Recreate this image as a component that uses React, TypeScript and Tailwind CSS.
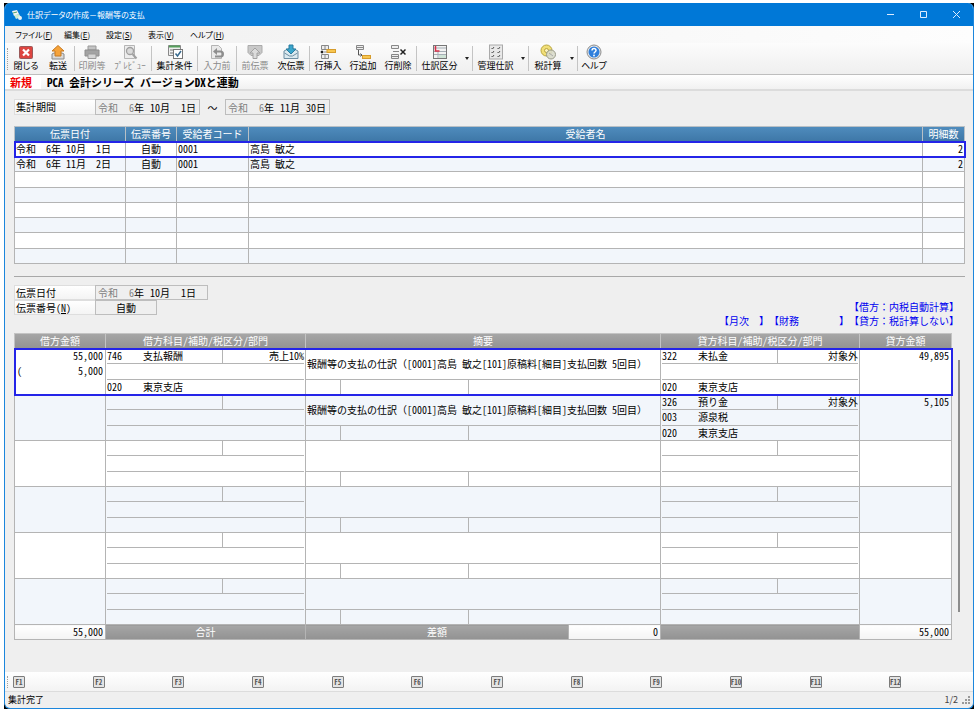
import { Fragment, ReactNode } from "react";

type IconName =
  | "close" | "send" | "print" | "preview" | "filter" | "before" | "prev" | "next"
  | "insert" | "append" | "remove" | "division" | "manage" | "tax" | "help";

const icons: Record<IconName, ReactNode> = {
  close: (
    <>
      <rect x="1.500" y="2.500" width="13" height="12" rx="1" fill="#dd4540" stroke="#9a5a5a" />
      <path d="M5 5.500l6 6M11 5.500l-6 6" stroke="#fff" strokeWidth="2.200" />
    </>
  ),
  send: (
    <>
      <path d="M2 10v5h12v-5l-2-1H4z" fill="#d9d9d9" stroke="#8a8a8a" />
      <path d="M8 1.500l6 5.500h-3v5H5V7H2z" fill="#f6a33a" stroke="#c77a22" />
    </>
  ),
  print: (
    <>
      <path d="M4 2h8v4H4z" fill="#c4c4c4" stroke="#999" />
      <path d="M1 6h14v6H1z" fill="#a3a3a3" stroke="#8e8e8e" />
      <path d="M4 10h8v4.500H4z" fill="#d6d6d6" stroke="#999" />
    </>
  ),
  preview: (
    <>
      <path d="M2.500 1.500h10v13h-10z" fill="#ededed" stroke="#b5b5b5" />
      <circle cx="8" cy="7" r="3.500" fill="#dadada" stroke="#a0a0a0" strokeWidth="1.300" />
      <path d="M10.500 10l4 4.500" stroke="#a0a0a0" strokeWidth="2" />
    </>
  ),
  filter: (
    <>
      <path d="M1.500 1.500h12v10h-12z" fill="#eee" stroke="#888" />
      <path d="M2 2.500h11" stroke="#56a05c" strokeWidth="2" />
      <path d="M3 6h3M3 9h3" stroke="#777" />
      <rect x="6.500" y="5.500" width="9" height="9" fill="#fff" stroke="#777" />
      <path d="M8.500 9.500l2 2.500 3.500-5" fill="none" stroke="#386a8e" strokeWidth="1.500" />
    </>
  ),
  before: (
    <>
      <path d="M2.500 1.500h7l3 3v10h-10z" fill="#e9e9e9" stroke="#b4b4b4" />
      <path d="M7 7.500h4.500a2.500 2.500 0 010 5H6" fill="none" stroke="#8e8e8e" strokeWidth="2" />
      <path d="M8 4v7L4 7.500z" fill="#8e8e8e" />
    </>
  ),
  prev: (
    <>
      <path d="M1 1.500h14v7l-3 3H4l-3-3z" fill="#c9c9c9" stroke="#ababab" />
      <path d="M8 4l5 5h-3v5.500H6V9H3z" fill="#dcdcdc" stroke="#a2a2a2" />
    </>
  ),
  next: (
    <>
      <path d="M1 7v7.500h14V7l-4-2H5z" fill="#dbe9ef" stroke="#6e8fa3" />
      <path d="M1.500 9l5 3h3l5-3" fill="none" stroke="#6e8fa3" />
      <path d="M6 1h4v4h3l-5 5-5-5h3z" fill="#3aa6cc" stroke="#2b7da0" />
    </>
  ),
  insert: (
    <>
      <path d="M1.500 1.500h7v4h-7zM1.500 10.500h7v4h-7zM5 1.500v4M5 10.500v4" fill="#eee" stroke="#888" />
      <path d="M1 7h2v2H1zM4 8h3" fill="#222" stroke="#222" strokeWidth="0.500" />
      <rect x="7" y="5.500" width="8.500" height="3" fill="#f8c64f" stroke="#d69c2c" />
    </>
  ),
  append: (
    <>
      <path d="M1.500 1.500h7v4h-7zM1.500 3.500h7" fill="#eee" stroke="#888" />
      <path d="M3.500 6v5h3M5.500 9.500L7 11l-1.500 1.500" fill="none" stroke="#555" />
      <rect x="7.500" y="11.500" width="8" height="3" fill="#f8c64f" stroke="#d69c2c" />
    </>
  ),
  remove: (
    <>
      <path d="M1.500 1.500h7v3h-7zM1.500 10.500h7v4h-7zM1.500 12.500h7M3 7.500h6" fill="#eee" stroke="#888" />
      <path d="M10.500 5.500l5 5M15.500 5.500l-5 5" stroke="#222" strokeWidth="1.500" />
    </>
  ),
  division: (
    <>
      <rect x="1.500" y="1.500" width="13" height="13" fill="#f2f2f2" stroke="#777" />
      <path d="M2 4h12M2 7.500h12M2 10.500h12M6 8v6" stroke="#a5aeb5" />
      <path d="M3.500 2v5h4" fill="none" stroke="#d9304a" strokeWidth="1.500" />
      <path d="M7 11h7v3H7z" fill="#cfe3d6" />
    </>
  ),
  manage: (
    <>
      <rect x="1.500" y="1" width="13" height="14" fill="#e8e8e8" stroke="#aaa" />
      <path d="M3.500 4l1 1 1.500-2M3.500 8l1 1 1.500-2M3.500 12l1 1 1.500-2M9.500 4l1 1 1.500-2M9.500 8l1 1 1.500-2M9.500 12l1 1 1.500-2" fill="none" stroke="#555" />
    </>
  ),
  tax: (
    <>
      <circle cx="6.500" cy="6.500" r="5.500" fill="#f1df78" stroke="#b9a640" />
      <circle cx="6.500" cy="6.500" r="2" fill="#fbf3c0" stroke="#b9a640" />
      <circle cx="11" cy="10.500" r="4.500" fill="#d8dacb" fillOpacity="0.900" stroke="#989a8a" />
      <path d="M9 9l4 3" stroke="#aaa" />
    </>
  ),
  help: (
    <>
      <circle cx="8" cy="8" r="7" fill="#e6e6e6" stroke="#8d8d8d" />
      <circle cx="8" cy="8" r="5.500" fill="#2f7fdc" />
      <path d="M6 6.500c0-3 4.200-2.500 4 0C9.900 8 8 8 8 9.500" fill="none" stroke="#fff" strokeWidth="1.500" />
      <circle cx="8" cy="11.500" r="0.900" fill="#fff" />
    </>
  ),
};

function Icon({ name }: { name: IconName }) {
  return (
    <svg viewBox="0 0 16 16" className="size-4 shrink-0" aria-hidden="true">
      {icons[name]}
    </svg>
  );
}

type Tool = { icon: IconName; label: string; width: string; off?: boolean; menu?: string };

const toolGroups: Tool[][] = [
  [
    { icon: "close", label: "閉じる", width: "w-8" },
    { icon: "send", label: "転送", width: "w-8" },
  ],
  [
    { icon: "print", label: "印刷等", width: "w-[34px]", off: true },
    { icon: "preview", label: "ﾌﾟﾚﾋﾞｭｰ", width: "w-[42px]", off: true },
  ],
  [{ icon: "filter", label: "集計条件", width: "w-[45px]" }],
  [{ icon: "before", label: "入力前", width: "w-[38px]", off: true }],
  [
    { icon: "prev", label: "前伝票", width: "w-9", off: true },
    { icon: "next", label: "次伝票", width: "w-9" },
  ],
  [
    { icon: "insert", label: "行挿入", width: "w-9" },
    { icon: "append", label: "行追加", width: "w-[34px]" },
    { icon: "remove", label: "行削除", width: "w-9" },
  ],
  [{ icon: "division", label: "仕訳区分", width: "w-[45px]", menu: "w-[10px]" }],
  [{ icon: "manage", label: "管理仕訳", width: "w-[45px]", menu: "w-[10px]" }],
  [{ icon: "tax", label: "税計算", width: "w-[38px]", menu: "w-[10px]" }],
  [{ icon: "help", label: "ヘルプ", width: "w-8" }],
];

const menus = [
  { label: "ファイル", key: "F", width: "w-[49px]" },
  { label: "編集", key: "E", width: "w-[42px]" },
  { label: "設定", key: "S", width: "w-[42px]" },
  { label: "表示", key: "V", width: "w-[42px]" },
  { label: "ヘルプ", key: "H", width: "w-[49px]" },
];

function TitleBar() {
  return (
    <header className="flex h-[23px] items-center bg-[#0078d7] pl-[6px] text-[8px] text-white">
      <svg viewBox="0 0 12 12" className="mr-1 size-3" aria-hidden="true">
        <path d="M1 2l5-1 2 4-5 2z" fill="#f4f4f4" />
        <path d="M3 6l5-1 2 3-5 2z" fill="#c9ecd2" />
        <circle cx="9" cy="9" r="2" fill="#e9f1f6" />
        <path d="M2 4l4-1" stroke="#53a668" />
      </svg>
      <h1 className="flex-1">仕訳データの作成－報酬等の支払</h1>
      {[
        { label: "最小化", d: "M1 4.500h7" },
        { label: "最大化", d: "M1.500 1.500h6v6h-6z" },
        { label: "閉じる", d: "M1 1l7 7M8 1L1 8" },
      ].map((b) => (
        <button key={b.label} aria-label={b.label} className="flex h-full w-[33px] items-center justify-center">
          <svg viewBox="0 0 9 9" className="size-[9px]" fill="none" stroke="#dcecff" aria-hidden="true">
            <path d={b.d} />
          </svg>
        </button>
      ))}
    </header>
  );
}

function MenuBar() {
  return (
    <nav className="flex h-[17px] items-center bg-linear-to-r from-[#f0f0f0] to-[#fdfdfd] pl-[10px] text-[8px]">
      {menus.map((m) => (
        <button key={m.key} className={`${m.width} text-left whitespace-nowrap`}>
          {m.label}(<u>{m.key}</u>)
        </button>
      ))}
    </nav>
  );
}

function Toolbar() {
  return (
    <div role="toolbar" className="flex h-8 items-center border-b border-[#bebebe] bg-linear-to-b from-[#fcfcfc] to-[#efefef] text-[9px]">
      <span className="mx-[2px] h-[22px] w-px border-l border-dotted border-[#a0a0a0]" />
      {toolGroups.map((group, i) => (
        <Fragment key={i}>
          {i > 0 && <span className="h-[25px] w-px bg-[#c4c4c4]" />}
          {group.map((t) => (
            <Fragment key={t.label}>
              <button
                disabled={t.off}
                className={`${t.width} flex h-[29px] flex-col items-center leading-[12px] whitespace-nowrap disabled:text-[#8a8a8a]`}
              >
                <Icon name={t.icon} />
                {t.label}
              </button>
              {t.menu && (
                <button aria-label={`${t.label}のメニュー`} className={`${t.menu} flex justify-center`}>
                  <svg viewBox="0 0 4 3" className="h-[3px] w-1" aria-hidden="true">
                    <path d="M0 0h4L2 3z" fill="#222" />
                  </svg>
                </button>
              )}
            </Fragment>
          ))}
        </Fragment>
      ))}
    </div>
  );
}

const labelBox =
  "block h-full w-[81px] border border-r-0 border-[#dedede] bg-linear-to-b from-white to-[#f4f4f4] pl-[1px] leading-[14px]";

// Full-width punctuation keeps its full cell inside half-width text.
function Wide({ children }: { children: ReactNode }) {
  return <span className="[font-feature-settings:normal]">{children}</span>;
}

function DateField({ name, year, month, day, width }: { name: string; year: string; month: string; day: string; width: string }) {
  return (
    <span className={`${width} flex h-full items-center border border-[#bdbdbd] pl-[2px]`}>
      <input readOnly aria-label={`${name} 元号`} value="令和" className="w-5 text-[#808080]" />
      <input readOnly aria-label={`${name} 年`} value={year} className="w-4 text-right text-[#808080]" />
      年
      <input readOnly aria-label={`${name} 月`} value={month} className="w-4 text-right" />
      月
      <input readOnly aria-label={`${name} 日`} value={day} className="w-4 text-right" />
      日
    </span>
  );
}

const vouchers = [
  { date: "令和  6年 10月  1日", no: "自動", code: "0001", name: "高島 敏之", count: "2" },
  { date: "令和  6年 11月  2日", no: "自動", code: "0001", name: "高島 敏之", count: "2" },
];

function VoucherTable() {
  const rows = Array.from({ length: 8 }, (_, i) => vouchers[i]);
  const cell = "border border-[#b4b4b4] px-px py-0 whitespace-pre";
  return (
    <table className="mt-[11px] w-full table-fixed border-collapse leading-[14px]">
      <colgroup>
        <col className="w-[111px]" />
        <col className="w-[51px]" />
        <col className="w-[72px]" />
        <col />
        <col className="w-[42px]" />
      </colgroup>
      <thead>
        <tr className="h-[15px] bg-linear-to-b from-[#4f8cbd] to-[#3d76a6] text-white">
          {["伝票日付", "伝票番号", "受給者コード", "受給者名", "明細数"].map((h) => (
            <th key={h} className="border border-[#b8c0c6] p-0 font-normal">{h}</th>
          ))}
        </tr>
      </thead>
      <tbody>
        {rows.map((r, i) => (
          <tr
            key={i}
            className={`${i % 4 === 2 ? "h-4" : "h-[15px]"} ${
              i === 0
                ? "relative bg-white outline-2 -outline-offset-1 outline-[#2424e8]"
                : i % 2
                  ? "bg-[#f2f6fb]"
                  : "bg-white"
            }`}
          >
            <td className={cell}>{r?.date}</td>
            <td className={`${cell} text-center`}>{r?.no}</td>
            <td className={cell}>{r?.code}</td>
            <td className={cell}>{r?.name}</td>
            <td className={`${cell} text-right`}>{r?.count}</td>
          </tr>
        ))}
      </tbody>
    </table>
  );
}

type Account = { code: string; name: string; tax: string; subCode?: string; sub?: string; deptCode: string; dept: string };
type Entry = { debit?: string; debitTax?: string; debitAcc?: Account; note?: ReactNode; credit?: string; creditAcc?: Account };

const note = (
  <p>
    報酬等の支払の仕訳<Wide>（</Wide>[0001]高島 敏之[101]原稿料[細目]支払回数 5回目<Wide>）</Wide>
  </p>
);

const entries: Entry[] = [
  {
    debit: "55,000",
    debitTax: "5,000",
    debitAcc: { code: "746", name: "支払報酬", tax: "売上10%", deptCode: "020", dept: "東京支店" },
    note,
    credit: "49,895",
    creditAcc: { code: "322", name: "未払金", tax: "対象外", deptCode: "020", dept: "東京支店" },
  },
  {
    note,
    credit: "5,105",
    creditAcc: { code: "326", name: "預り金", tax: "対象外", subCode: "003", sub: "源泉税", deptCode: "020", dept: "東京支店" },
  },
  {},
  {},
  {},
  {},
];

function AccountCell({ acc }: { acc?: Account }) {
  return (
    <div className="px-px leading-[13px]">
      <div className="flex h-[15px] border-b border-[#b4b4b4]">
        <span className="w-9">{acc?.code}</span>
        <span className="w-20 border-r border-[#b4b4b4]">{acc?.name}</span>
        <span className="flex-1 text-right">{acc?.tax}</span>
      </div>
      <div className="flex h-4 border-b border-[#b4b4b4]">
        <span className="w-9">{acc?.subCode}</span>
        <span>{acc?.sub}</span>
      </div>
      <div className="flex h-[14px]">
        <span className="w-9">{acc?.deptCode}</span>
        <span>{acc?.dept}</span>
      </div>
    </div>
  );
}

function JournalTable() {
  const td = "border border-[#b4b4b4] p-0 align-top";
  const th = "border border-[#c4c4c4] p-0 font-normal";
  const gray = "bg-linear-to-b from-[#a6a6a6] to-[#929292] text-white";
  const total = "border border-[#b4b4b4] bg-linear-to-b from-white to-[#f3f3f3] px-[2px] py-0 text-right";
  return (
    <table className="flex-1 table-fixed border-collapse leading-[14px]">
      <colgroup>
        <col className="w-[91px]" />
        <col className="w-[200px]" />
        <col />
        <col className="w-[92px]" />
        <col className="w-[199px]" />
        <col className="w-[92px]" />
      </colgroup>
      <thead>
        <tr className={gray}>
          <th className={th}>借方金額</th>
          <th className={th}>借方科目/補助/税区分/部門</th>
          <th colSpan={2} className={th}>摘要</th>
          <th className={th}>貸方科目/補助/税区分/部門</th>
          <th className={th}>貸方金額</th>
        </tr>
      </thead>
      <tbody>
        {entries.map((e, i) => (
          <tr
            key={i}
            className={
              i === 0
                ? "relative bg-white outline-2 -outline-offset-1 outline-[#2424e8]"
                : i % 2
                  ? "bg-[#f2f6fb]"
                  : "bg-white"
            }
          >
            <td className={`${td} px-[2px] leading-[13px]`}>
              <div className="h-[15px] text-right">{e.debit}</div>
              {e.debitTax && (
                <div className="flex justify-between">
                  <span>(</span>
                  <span>{e.debitTax}</span>
                </div>
              )}
            </td>
            <td className={td}><AccountCell acc={e.debitAcc} /></td>
            <td colSpan={2} className={td}>
              <div className="flex h-[31px] items-center border-b border-[#b4b4b4] px-px whitespace-nowrap">{e.note}</div>
              <div className="flex h-[14px]">
                <span className="w-[35px] border-r border-[#b4b4b4]" />
                <span className="w-32 border-r border-[#b4b4b4]" />
              </div>
            </td>
            <td className={td}><AccountCell acc={e.creditAcc} /></td>
            <td className={`${td} px-[2px] text-right leading-[13px]`}>{e.credit}</td>
          </tr>
        ))}
      </tbody>
      <tfoot>
        <tr>
          <td className={total}>55,000</td>
          <th className={`${gray} border border-[#b4b4b4] p-0 font-normal`}>合計</th>
          <th className={`${gray} border border-[#b4b4b4] p-0 font-normal`}>差額</th>
          <td className={total}>0</td>
          <td className={`${gray} border border-[#b4b4b4] p-0`} />
          <td className={total}>55,000</td>
        </tr>
      </tfoot>
    </table>
  );
}

function FunctionKeys() {
  return (
    <div className="flex h-5 items-center border-b border-[#dcdcdc] bg-linear-to-b from-white to-[#f3f3f3] pr-1">
      <span className="mx-[2px] h-3 w-px border-l border-dotted border-[#a0a0a0]" />
      <div className="ml-[3px] grid flex-1 grid-cols-12">
        {Array.from({ length: 12 }, (_, i) => (
          <button
            key={i}
            className="flex h-3 w-3 items-center justify-center rounded-[1px] border border-[#7c7c7c] bg-[#e4e4e4] text-[7px] leading-[10px] font-bold text-[#555]"
          >
            F{i + 1}
          </button>
        ))}
      </div>
    </div>
  );
}

export default function App() {
  return (
    <div className="flex min-h-screen bg-white pt-[3px] pr-[2px] pb-[3px] pl-1 font-['Noto_Sans_CJK_JP',sans-serif] text-[10px] text-black">
      <div className="flex min-w-0 flex-1 bg-black">
        <div className="flex min-w-0 flex-1 flex-col overflow-hidden rounded-md border border-t-0 border-[#1c86dc] bg-[#efefef] [font-feature-settings:'hwid']">
          <div className="[font-feature-settings:'palt']">
            <TitleBar />
            <MenuBar />
            <Toolbar />
          </div>
          <div className="flex h-4 items-center border-b-2 border-[#dcdcdc] bg-linear-to-b from-white to-[#f1f1f1] text-[11px] leading-[14px] font-bold">
            <span className="w-9 bg-white pl-[5px] text-[#f00000]">新規</span>
            <span className="pl-[6px]">PCA 会計シリーズ バージョンDXと連動</span>
          </div>

          <main className="flex-1 pt-2 pr-2 pl-[9px]">
            <div role="group" aria-label="集計期間" className="flex h-4 items-center">
              <span className={labelBox}>集計期間</span>
              <DateField name="開始" year="6" month="10" day="1" width="w-[105px]" />
              <span className="w-[25px] text-center"><Wide>～</Wide></span>
              <DateField name="終了" year="6" month="11" day="30" width="w-[105px]" />
            </div>

            <VoucherTable />
            <hr className="mt-3 border-[#a8a8a8]" />

            <section className="mt-2 flex justify-between">
              <div>
                <div role="group" aria-label="伝票日付" className="flex h-[15px]">
                  <span className={labelBox}>伝票日付</span>
                  <DateField name="伝票" year="6" month="10" day="1" width="w-[113px]" />
                </div>
                <div className="flex h-[15px]">
                  <label htmlFor="voucher-no" className={labelBox}>
                    伝票番号(<u>N</u>)
                  </label>
                  <input id="voucher-no" readOnly value="自動" className="w-[62px] border border-[#bdbdbd] text-center" />
                </div>
              </div>
              <div className="pt-[15px] pr-[6px] text-right leading-[14px] whitespace-pre text-[#0000f0] [font-feature-settings:normal]">
                <p>【借方：内税自動計算】</p>
                <p className="flex justify-end">
                  <span>【月次　】</span>
                  <span>【財務　　　　】</span>
                  <span>【貸方：税計算しない】</span>
                </p>
              </div>
            </section>

            <section className="mt-[5px] flex pr-[5px]">
              <JournalTable />
              <div className="mt-[27px] mb-7 ml-[6px] w-[2px] bg-[#8c8c8c]" />
            </section>
          </main>

          <FunctionKeys />
          <footer className="flex h-4 items-center justify-between pr-[2px] pl-[3px] text-[9px] [font-feature-settings:normal]">
            <span>集計完了</span>
            <span className="flex items-center gap-1 text-[#444]">
              1/2
              <svg viewBox="0 0 9 9" className="size-[9px]" fill="#999" aria-hidden="true">
                <path d="M6 0h2v2H6zM6 3h2v2H6zM3 3h2v2H3zM6 6h2v2H6zM3 6h2v2H3zM0 6h2v2H0z" />
              </svg>
            </span>
          </footer>
        </div>
      </div>
    </div>
  );
}
